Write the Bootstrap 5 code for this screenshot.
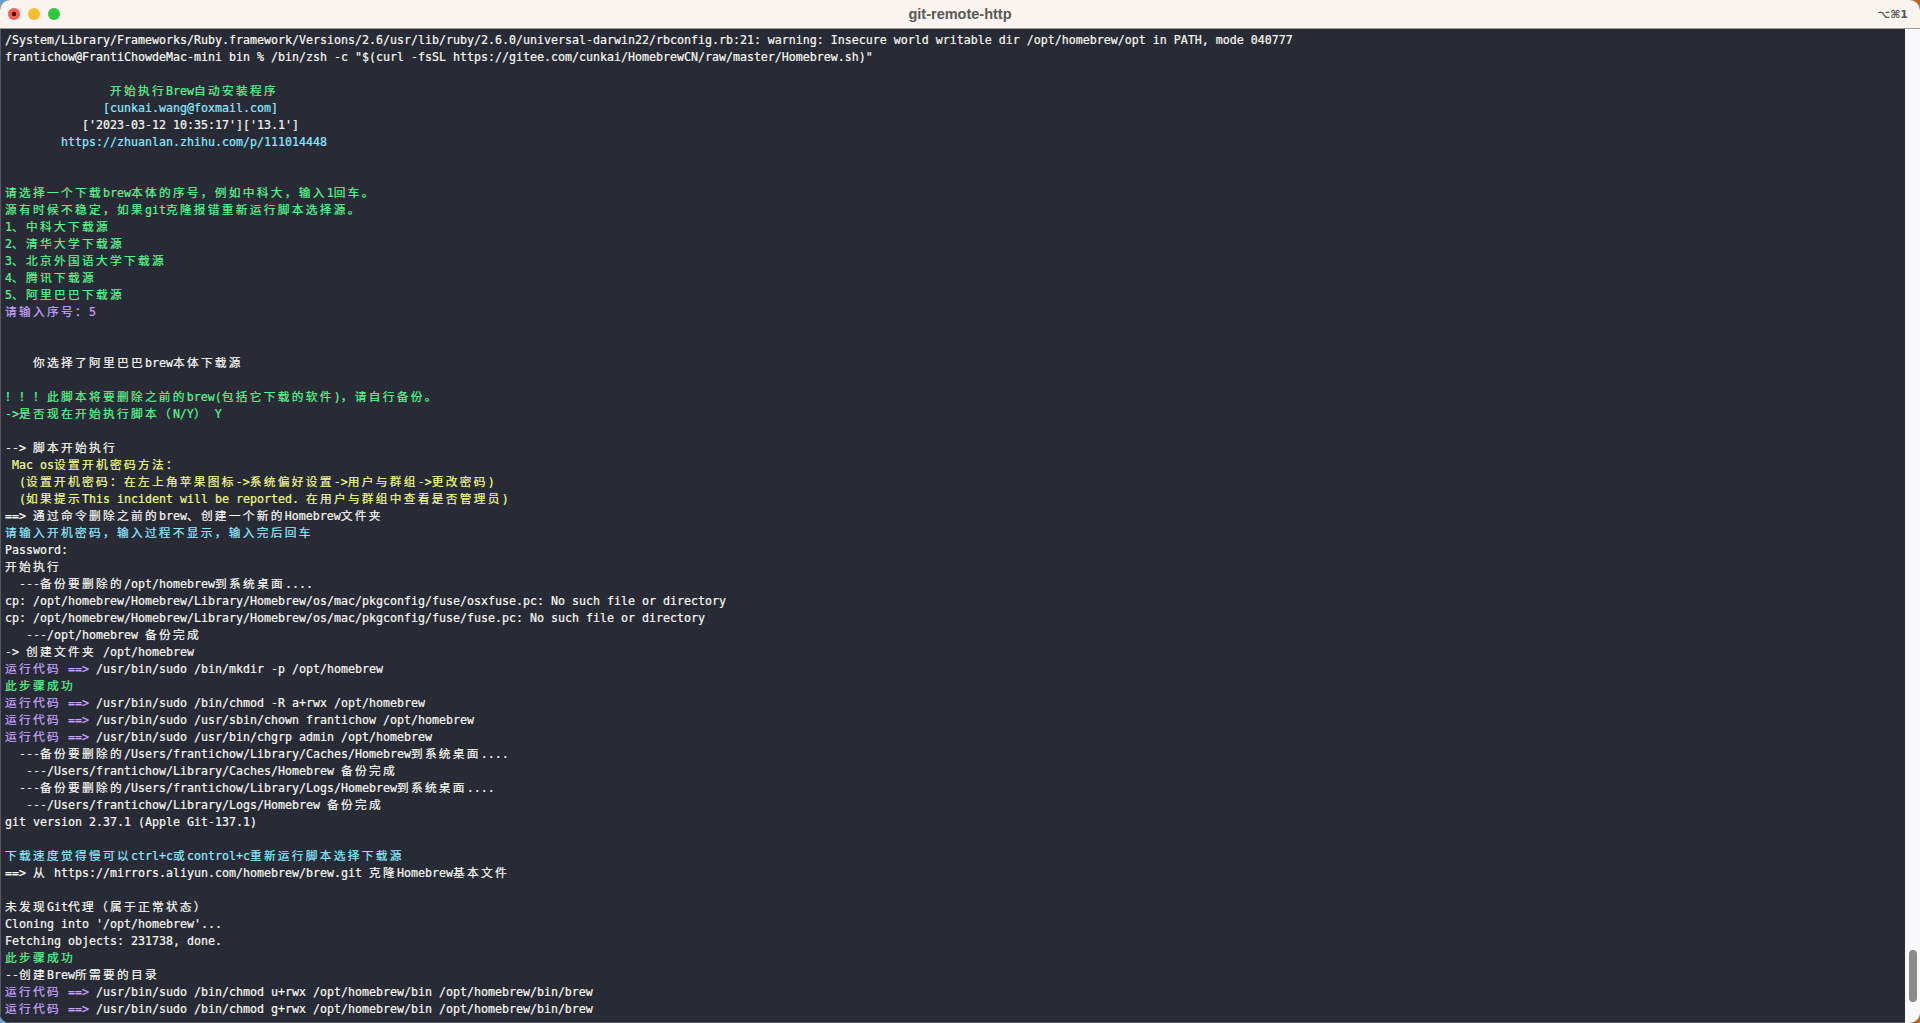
<!DOCTYPE html>
<html lang="zh-CN">
<head>
<meta charset="utf-8">
<title>git-remote-http</title>
<link href="https://cdn.jsdelivr.net/npm/bootstrap@5.3.0/dist/css/bootstrap.min.css" rel="stylesheet">
<style>
html,body{height:100%;overflow:hidden}
body{background:linear-gradient(90deg,#6f9fc9 0 50%,#c8611c 50% 100%)}
.term-window{height:1023px;border-radius:10px;overflow:hidden;background:#282a36}
.title-bar{height:29px;flex:none;background:#f9f4ef;border-bottom:1px solid #9d9a97;padding:0 12px 0 8px;color:#5a5856;font:700 14.5px "Liberation Sans",sans-serif;position:relative}
.light{width:12px;height:12px;border-radius:50%;display:block}
.light-red{background:radial-gradient(circle,#5c0a08 0 2px,#ee5f57 2.5px);}
.light-yellow{background:#f6bd2f}
.light-green{background:#2ac73f}
.title-name{position:absolute;left:0;right:0;text-align:center}
.title-keys{margin-left:auto;font:700 11px "DejaVu Sans",sans-serif}
.term-area{min-height:0}
.term-text{margin:0;padding:3px 0 0 5px;overflow:hidden;font:11.63px/17px "DejaVu Sans Mono","Noto Sans CJK SC",monospace;color:#f8f8f2;background:#282a36;white-space:pre;box-shadow:inset 1px 0 #565862,inset 0 -1px #565862;-webkit-text-stroke:.2px}
.cj{font-family:"Noto Sans CJK SC","DejaVu Sans Mono",monospace;font-size:11.7px;letter-spacing:2.3px;line-height:0}
.tg{color:#5af78e}
.tc{color:#8be9fd}
.tp{color:#c5a3fb}
.ty{color:#f1fa8c}
.scroll-track{width:15px;flex:none;background:#f9f9fb;padding-bottom:21px}
.scroll-thumb{width:8px;height:52px;border-radius:4px;background:#8b8b8b}
</style>
</head>
<body>
<div class="term-window d-flex flex-column">
  <div class="title-bar d-flex align-items-center">
    <div class="d-flex gap-2"><span class="light light-red"></span><span class="light light-yellow"></span><span class="light light-green"></span></div>
    <div class="title-name">git-remote-http</div>
    <div class="title-keys">⌥⌘1</div>
  </div>
  <div class="term-area d-flex flex-grow-1">
<pre class="term-text flex-grow-1">/System/Library/Frameworks/Ruby.framework/Versions/2.6/usr/lib/ruby/2.6.0/universal-darwin22/rbconfig.rb:21: warning: Insecure world writable dir /opt/homebrew/opt in PATH, mode 040777
frantichow@FrantiChowdeMac-mini bin % /bin/zsh -c "$(curl -fsSL https://gitee.com/cunkai/HomebrewCN/raw/master/Homebrew.sh)"

<span class="tg">               <span class="cj">开始执行</span>Brew<span class="cj">自动安装程序</span></span>
<span class="tc">              [cunkai.wang@foxmail.com]</span>
           ['2023-03-12 10:35:17']['13.1']
<span class="tc">        https://zhuanlan.zhihu.com/p/111014448</span>


<span class="tg"><span class="cj">请选择一个下载</span>brew<span class="cj">本体的序号，例如中科大，输入</span>1<span class="cj">回车。</span></span>
<span class="tg"><span class="cj">源有时候不稳定，如果</span>git<span class="cj">克隆报错重新运行脚本选择源。</span></span>
<span class="tg">1<span class="cj">、中科大下载源</span></span>
<span class="tg">2<span class="cj">、清华大学下载源</span></span>
<span class="tg">3<span class="cj">、北京外国语大学下载源</span></span>
<span class="tg">4<span class="cj">、腾讯下载源</span></span>
<span class="tg">5<span class="cj">、阿里巴巴下载源</span></span>
<span class="tp"><span class="cj">请输入序号：</span>5</span>


    <span class="cj">你选择了阿里巴巴</span>brew<span class="cj">本体下载源</span>

<span class="tg"><span class="cj">！！！此脚本将要删除之前的</span>brew(<span class="cj">包括它下载的软件</span>)<span class="cj">，请自行备份。</span></span>
<span class="tg">-&gt;<span class="cj">是否现在开始执行脚本（</span>N/Y<span class="cj">）</span> Y</span>

--&gt; <span class="cj">脚本开始执行</span>
<span class="ty"> Mac os<span class="cj">设置开机密码方法：</span></span>
<span class="ty">  (<span class="cj">设置开机密码：在左上角苹果图标</span>-&gt;<span class="cj">系统偏好设置</span>-&gt;<span class="cj">用户与群组</span>-&gt;<span class="cj">更改密码</span>)</span>
<span class="ty">  (<span class="cj">如果提示</span>This incident will be reported. <span class="cj">在用户与群组中查看是否管理员</span>)</span>
==&gt; <span class="cj">通过命令删除之前的</span>brew<span class="cj">、创建一个新的</span>Homebrew<span class="cj">文件夹</span>
<span class="tc"><span class="cj">请输入开机密码，输入过程不显示，输入完后回车</span></span>
Password:
<span class="cj">开始执行</span>
  ---<span class="cj">备份要删除的</span>/opt/homebrew<span class="cj">到系统桌面</span>....
cp: /opt/homebrew/Homebrew/Library/Homebrew/os/mac/pkgconfig/fuse/osxfuse.pc: No such file or directory
cp: /opt/homebrew/Homebrew/Library/Homebrew/os/mac/pkgconfig/fuse/fuse.pc: No such file or directory
   ---/opt/homebrew <span class="cj">备份完成</span>
-&gt; <span class="cj">创建文件夹</span> /opt/homebrew
<span class="tp"><span class="cj">运行代码</span> ==&gt;</span> /usr/bin/sudo /bin/mkdir -p /opt/homebrew
<span class="tg"><span class="cj">此步骤成功</span></span>
<span class="tp"><span class="cj">运行代码</span> ==&gt;</span> /usr/bin/sudo /bin/chmod -R a+rwx /opt/homebrew
<span class="tp"><span class="cj">运行代码</span> ==&gt;</span> /usr/bin/sudo /usr/sbin/chown frantichow /opt/homebrew
<span class="tp"><span class="cj">运行代码</span> ==&gt;</span> /usr/bin/sudo /usr/bin/chgrp admin /opt/homebrew
  ---<span class="cj">备份要删除的</span>/Users/frantichow/Library/Caches/Homebrew<span class="cj">到系统桌面</span>....
   ---/Users/frantichow/Library/Caches/Homebrew <span class="cj">备份完成</span>
  ---<span class="cj">备份要删除的</span>/Users/frantichow/Library/Logs/Homebrew<span class="cj">到系统桌面</span>....
   ---/Users/frantichow/Library/Logs/Homebrew <span class="cj">备份完成</span>
git version 2.37.1 (Apple Git-137.1)

<span class="tc"><span class="cj">下载速度觉得慢可以</span>ctrl+c<span class="cj">或</span>control+c<span class="cj">重新运行脚本选择下载源</span></span>
==&gt; <span class="cj">从</span> https://mirrors.aliyun.com/homebrew/brew.git <span class="cj">克隆</span>Homebrew<span class="cj">基本文件</span>

<span class="cj">未发现</span>Git<span class="cj">代理（属于正常状态）</span>
Cloning into '/opt/homebrew'...
Fetching objects: 231738, done.
<span class="tg"><span class="cj">此步骤成功</span></span>
--<span class="cj">创建</span>Brew<span class="cj">所需要的目录</span>
<span class="tp"><span class="cj">运行代码</span> ==&gt;</span> /usr/bin/sudo /bin/chmod u+rwx /opt/homebrew/bin /opt/homebrew/bin/brew
<span class="tp"><span class="cj">运行代码</span> ==&gt;</span> /usr/bin/sudo /bin/chmod g+rwx /opt/homebrew/bin /opt/homebrew/bin/brew</pre>
    <div class="scroll-track d-flex align-items-end justify-content-center"><div class="scroll-thumb"></div></div>
  </div>
</div>
<script src="https://cdn.jsdelivr.net/npm/bootstrap@5.3.0/dist/js/bootstrap.bundle.min.js"></script>
</body>
</html>
